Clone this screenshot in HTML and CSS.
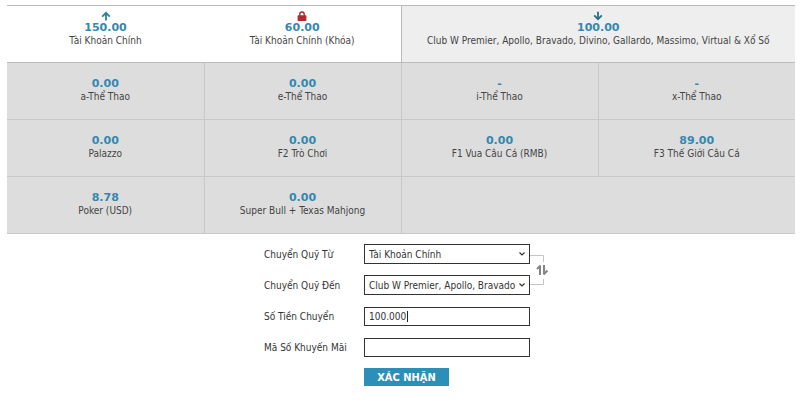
FILE: index.html
```html
<!DOCTYPE html>
<html lang="vi">
<head>
    <meta charset="UTF-8">
    <meta name="viewport" content="width=device-width, initial-scale=1.0">
    <title>Chuyển Quỹ</title>
    <link rel="stylesheet" href="styles.css">
</head>
<body>

<table class="balances">
    <tbody>
        <tr class="main-row">
            <td>
                <svg class="icon" viewBox="0 0 10 10" aria-hidden="true"><path d="M5 9.5V2M1.2 5.6L5 1.8l3.8 3.8" fill="none" stroke="#2b8295" stroke-width="1.8"/></svg>
                <div class="amount">150.00</div>
                <div class="name">Tài Khoản Chính</div>
            </td>
            <td>
                <svg class="icon" viewBox="0 0 10 10" aria-hidden="true"><path d="M2.8 5V3.2a2.2 2.2 0 0 1 4.4 0V5" fill="none" stroke="#b02a30" stroke-width="1.4"/><rect x="0.6" y="4.2" width="8.8" height="5.8" rx="0.8" fill="#b02a30"/></svg>
                <div class="amount">60.00</div>
                <div class="name">Tài Khoản Chính (Khóa)</div>
            </td>
            <td class="target" colspan="2">
                <svg class="icon" viewBox="0 0 10 10" aria-hidden="true"><path d="M5 0.8V8M1.2 4.4L5 8.2l3.8-3.8" fill="none" stroke="#256f8a" stroke-width="1.8"/></svg>
                <div class="amount">100.00</div>
                <div class="name">Club W Premier, Apollo, Bravado, Divino, Gallardo, Massimo, Virtual &amp; Xổ Số</div>
            </td>
        </tr>
        <tr>
            <td><div class="amount">0.00</div><div class="name">a-Thể Thao</div></td>
            <td><div class="amount">0.00</div><div class="name">e-Thể Thao</div></td>
            <td><div class="amount">-</div><div class="name">i-Thể Thao</div></td>
            <td><div class="amount">-</div><div class="name">x-Thể Thao</div></td>
        </tr>
        <tr>
            <td><div class="amount">0.00</div><div class="name">Palazzo</div></td>
            <td><div class="amount">0.00</div><div class="name">F2 Trò Chơi</div></td>
            <td><div class="amount">0.00</div><div class="name">F1 Vua Câu Cá (RMB)</div></td>
            <td><div class="amount">89.00</div><div class="name">F3 Thế Giới Câu Cá</div></td>
        </tr>
        <tr>
            <td><div class="amount">8.78</div><div class="name">Poker (USD)</div></td>
            <td><div class="amount">0.00</div><div class="name">Super Bull + Texas Mahjong</div></td>
            <td colspan="2"></td>
        </tr>
    </tbody>
</table>

<form class="transfer">
    <label for="from">Chuyển Quỹ Từ</label>
    <select id="from">
        <option>Tài Khoản Chính</option>
        <option>Tài Khoản Chính (Khóa)</option>
    </select>
    <button type="button" class="swap" aria-label="Đổi">
        <svg viewBox="0 0 20 32" aria-hidden="true">
            <path d="M0 1.5H13.5V8M0 30.5H13.5V25" fill="none" stroke="#c4c4c4"/>
            <path d="M10 21V11.5M10.5 11.5L7 15" fill="none" stroke="#858585" stroke-width="2"/>
            <path d="M14 11V20.5M13.5 20.5L17.5 16.5" fill="none" stroke="#858585" stroke-width="2"/>
        </svg>
    </button>

    <label for="to">Chuyển Quỹ Đến</label>
    <select id="to">
        <option>Club W Premier, Apollo, Bravado</option>
    </select>

    <label for="amount">Số Tiền Chuyển</label>
    <div class="money">
        <input type="text" id="amount" value="100.000">
    </div>

    <label for="promo">Mã Số Khuyến Mãi</label>
    <input type="text" id="promo">

    <button type="submit" class="confirm">XÁC NHẬN</button>
</form>

</body>
</html>
```
FILE: styles.css
```css
body {
    font-family: "DejaVu Sans Condensed", Tahoma, sans-serif;
    font-size: 10px;
    margin: 5px 5px 0 7px;
    background-color: #fff;
    color: #444;
}
.balances {
    width: 100%;
    table-layout: fixed;
    border-collapse: collapse;
    border-top: 1px solid #bbb;
    border-bottom: 1px solid #b5b5b5;
}
.balances td {
    height: 42px;
    padding: 14px 0 0;
    border: 1px solid #c8c8c8;
    background-color: #ddd;
    text-align: center;
    vertical-align: top;
    line-height: 13px;
}
.balances td:first-child {
    border-left: none;
}
.balances td:last-child {
    border-right: none;
}
.balances .main-row td {
    height: 51px;
    padding-top: 5px;
    border-color: #bbb;
    background-color: #fff;
}
.balances .main-row td:first-child {
    border-right: none;
}
.balances .main-row td:nth-child(2) {
    border-left: none;
}
.balances .main-row .target {
    background-color: #eee;
}
.icon {
    display: block;
    width: 10px;
    height: 10px;
    margin: 0 auto;
}
.amount {
    font-family: "DejaVu Sans", Verdana, sans-serif;
    font-size: 11px;
    font-weight: bold;
    color: #3488b0;
}
.transfer {
    display: grid;
    grid-template-columns: 100px 166px 20px;
    grid-auto-rows: 20px;
    row-gap: 11px;
    justify-content: center;
    align-items: center;
    margin-top: 10px;
    padding-left: 12px;
    color: #333;
}
.transfer label {
    grid-column: 1;
}
.transfer select,
.transfer input {
    box-sizing: border-box;
    grid-column: 2;
    width: 100%;
    height: 19px;
    padding: 0 4px;
    border: 1px solid #333;
    border-radius: 0;
    outline: none;
    background-color: #fff;
    color: #333;
    font: inherit;
}
.transfer select {
    height: 20px;
    appearance: none;
    padding-right: 12px;
    background-image: url("data:image/svg+xml,%3Csvg xmlns='http://www.w3.org/2000/svg' viewBox='0 0 6 4'%3E%3Cpath d='M.5.5L3 3 5.5.5' fill='none' stroke='%23333' stroke-width='1.2'/%3E%3C/svg%3E");
    background-repeat: no-repeat;
    background-position: right 4px center;
    background-size: 6px 4px;
}
.transfer .money {
    position: relative;
    display: flex;
    grid-column: 2;
}
/* text cursor after the typed amount */
.money::after {
    content: "";
    position: absolute;
    top: 4px;
    left: 43px;
    width: 1px;
    height: 11px;
    background-color: #222;
}
.swap {
    grid-column: 3;
    grid-row: 1 / 3;
    width: 20px;
    height: 32px;
    padding: 0;
    border: none;
    background: none;
    cursor: pointer;
}
.swap svg {
    display: block;
    width: 20px;
    height: 32px;
}
.confirm {
    grid-column: 2;
    align-self: start;
    justify-self: start;
    width: 85px;
    height: 18px;
    padding: 0;
    border: none;
    background-color: #2b8fb8;
    color: #fff;
    font-family: inherit;
    font-size: 11px;
    font-weight: bold;
    cursor: pointer;
}
```
